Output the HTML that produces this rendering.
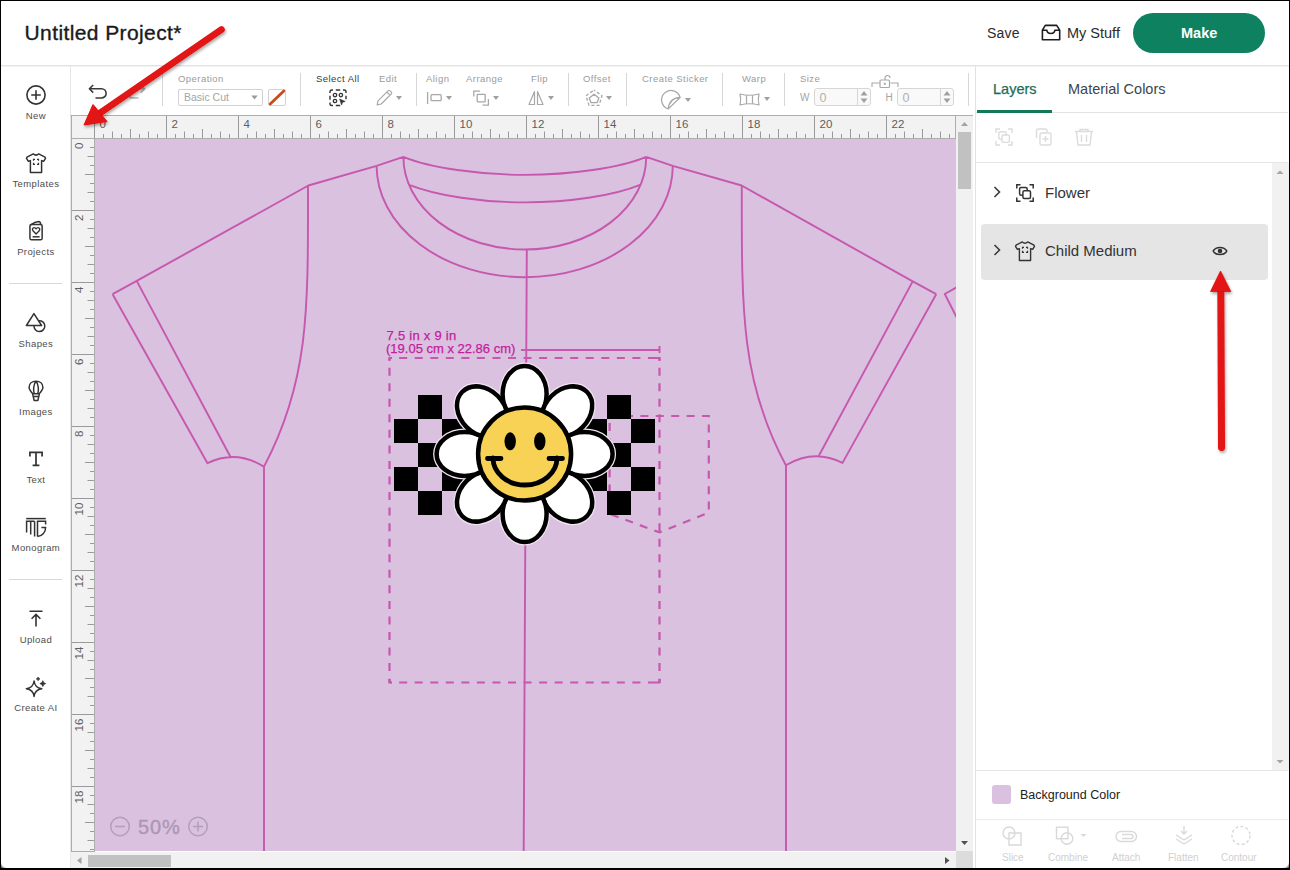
<!DOCTYPE html>
<html><head><meta charset="utf-8">
<style>
*{box-sizing:border-box;margin:0;padding:0}
html,body{width:1290px;height:870px;overflow:hidden;background:#fff;font-family:"Liberation Sans",sans-serif}
.a{position:absolute}
.t{position:absolute;white-space:nowrap;line-height:1}
.nav{position:absolute;left:0.4px;width:71px;text-align:center;font-size:9.5px;letter-spacing:0.4px;color:#4d4d4d;line-height:1;white-space:nowrap}
.lbl{position:absolute;font-size:9.5px;letter-spacing:0.45px;color:#9b9b9b;line-height:1;white-space:nowrap}
.sep{position:absolute;top:73px;width:1px;height:33px;background:#d6d6d6}
svg{position:absolute;overflow:visible}
</style></head><body>

<!-- HEADER -->
<div class="a" style="left:0;top:65px;width:1290px;height:1px;background:#e3e3e3"></div>
<div class="a" style="left:0;top:66px;width:1290px;height:1px;background:#f3f3f3"></div>
<div class="t" style="left:24.5px;top:22.3px;font-size:21px;color:#1a1a1a;letter-spacing:0.4px;-webkit-text-stroke:0.35px #1a1a1a">Untitled Project*</div>
<div class="t" style="left:987px;top:26px;font-size:14px;color:#2b2b2b;letter-spacing:0.2px">Save</div>
<svg style="left:1041px;top:24px" width="20" height="17" viewBox="0 0 20 17"><path d="M4.3 1.4 H15.7 L18.7 6.2 V15.7 H1.4 V6.2 Z M1.4 6.2 H5.8 C6.3 10.6 13.4 10.6 13.9 6.2 H18.7" fill="none" stroke="#1e1e1e" stroke-width="1.6" stroke-linejoin="round"/></svg>
<div class="t" style="left:1067px;top:26px;font-size:14.5px;color:#2b2b2b">My Stuff</div>
<div class="a" style="left:1133px;top:13px;width:132px;height:40px;border-radius:20px;background:#0e8160"></div>
<div class="t" style="left:1181px;top:26px;font-size:14.5px;font-weight:bold;color:#fff">Make</div>

<!-- SIDEBAR -->
<div class="a" style="left:70px;top:66px;width:1px;height:803px;background:#e6e6e6"></div>
<svg style="left:26px;top:85px" width="20" height="20" viewBox="0 0 20 20"><circle cx="10" cy="10" r="9.1" fill="none" stroke="#333" stroke-width="1.6"/><path d="M10 5.2V14.8M5.2 10H14.8" stroke="#333" stroke-width="1.6"/></svg>
<div class="nav" style="top:110.8px">New</div>
<svg style="left:26px;top:153px" width="20" height="20" viewBox="0 0 20 20"><path d="M7.3 0.9 L1 4.2 L0.5 5.4 L2.2 8.2 L4.4 7.6 V19.5 H15.6 V7.6 L17.8 8.2 L19.5 5.4 L19 4.2 L12.7 0.9 Q10 3.4 7.3 0.9 Z" fill="none" stroke="#333" stroke-width="1.5" stroke-linejoin="round"/><path d="M7.5 7.8V6.3H9M11 6.3H12.5V7.8M12.5 9.8V11.3H11M9 11.3H7.5V9.8" stroke="#333" stroke-width="1.2" fill="none"/></svg>
<div class="nav" style="top:178.8px">Templates</div>
<svg style="left:29px;top:221px" width="15" height="21" viewBox="0 0 15 21"><g fill="none" stroke="#333" stroke-width="1.5" stroke-linejoin="round"><rect x="0.95" y="3.4" width="12.2" height="15.4" rx="1.6"/><path d="M1.6 3.8 Q6 0.9 9.6 0.6 Q11.3 0.6 11.8 3.4"/><path d="M7.1 12.9 L4 9.8 C3 8.6 3.5 6.6 5.2 6.6 C6.1 6.6 6.7 7.2 7.1 7.8 C7.5 7.2 8.1 6.6 9 6.6 C10.7 6.6 11.2 8.6 10.2 9.8 Z" stroke-width="1.4"/><path d="M3.6 15.8 H10.6"/></g></svg>
<div class="nav" style="top:246.8px">Projects</div>
<div class="a" style="left:9px;top:283px;width:53px;height:1px;background:#d8d8d8"></div>
<svg style="left:26px;top:312px" width="22" height="22" viewBox="0 0 22 22"><path d="M7.9 1.6 L15.6 13.5 H0.4 Z" fill="none" stroke="#333" stroke-width="1.5" stroke-linejoin="round"/><path d="M12.7 8.74 A5.4 5.4 0 1 1 8.03 13.5" fill="none" stroke="#333" stroke-width="1.5"/></svg>
<div class="nav" style="top:338.8px">Shapes</div>
<svg style="left:22px;top:376px" width="28" height="28" viewBox="0 0 28 28"><g fill="none" stroke="#333" stroke-width="1.5" stroke-linejoin="round"><path d="M10.6 17.6 C8.2 15 7.1 13.2 7.1 11.3 C7.1 7.6 10 5.3 14 5.3 C18 5.3 20.9 7.6 20.9 11.3 C20.9 13.2 19.8 15 17.4 17.6"/><path d="M14 5.4 C11.2 8 11.2 15 12.3 17.6 M14 5.4 C16.8 8 16.8 15 15.7 17.6"/><path d="M10.6 17.8 H17.4 L15.9 24.4 H12.1 Z M11.3 20.6 H16.7"/></g></svg>
<div class="nav" style="top:406.8px">Images</div>
<svg style="left:28px;top:451px" width="16" height="16" viewBox="0 0 16 16"><path d="M1.9 5.5 V1.4 H14.1 V5.5 M8 1.4 V14.3 M4.6 14.3 H11.4" fill="none" stroke="#333" stroke-width="1.7"/></svg>
<div class="nav" style="top:474.8px">Text</div>
<svg style="left:22px;top:512px" width="28" height="28" viewBox="0 0 28 28"><g fill="none" stroke="#333" stroke-width="1.5"><path d="M4.2 6.6H23.8"/><path d="M4.6 20.6V9.3H12.6M8.7 9.3V22.4M12.6 9.3V24.5"/><path d="M15.5 24.5V9.3H23.6V12.6M19.4 15.5H23.6A8.1 9 0 0 1 15.5 24.5"/></g></svg>
<div class="nav" style="top:542.8px">Monogram</div>
<div class="a" style="left:9px;top:579px;width:53px;height:1px;background:#d8d8d8"></div>
<svg style="left:28px;top:610px" width="16" height="17" viewBox="0 0 16 17"><path d="M1.5 1.2H14.5M8 4.5V16.5M3.6 8.8L8 4.4L12.4 8.8" fill="none" stroke="#333" stroke-width="1.6"/></svg>
<div class="nav" style="top:634.8px">Upload</div>
<svg style="left:22px;top:672px" width="28" height="28" viewBox="0 0 28 28"><path d="M12.07 9 Q12.9 15.9 19.8 16.7 Q12.9 17.5 12.07 24.4 Q11.2 17.5 4.3 16.7 Q11.2 15.9 12.07 9 Z" fill="none" stroke="#333" stroke-width="1.5" stroke-linejoin="round"/><path d="M20.8 8.7 Q21.2 11.2 23.7 11.6 Q21.2 12 20.8 14.5 Q20.4 12 17.9 11.6 Q20.4 11.2 20.8 8.7Z M16.1 5.1 Q16.3 6.7 17.9 6.9 Q16.3 7.1 16.1 8.7 Q15.9 7.1 14.3 6.9 Q15.9 6.7 16.1 5.1Z" fill="#333" stroke="#333" stroke-width="0.8" stroke-linejoin="round"/></svg>
<div class="nav" style="top:702.8px">Create AI</div>
<!-- TOOLBAR -->
<svg style="left:88px;top:84px" width="20" height="16" viewBox="0 0 20 16"><path d="M1.5 4.8 H13.5 A4.6 4.6 0 0 1 13.5 14 H7.5" fill="none" stroke="#3a3a3a" stroke-width="1.6"/><path d="M5.2 1 L1.4 4.8 L5.2 8.6" fill="none" stroke="#3a3a3a" stroke-width="1.6" stroke-linejoin="round"/></svg>
<svg style="left:125.5px;top:84px" width="20" height="16" viewBox="0 0 20 16"><path d="M18.5 4.8 H6.5 A4.6 4.6 0 0 0 6.5 14 H12.5" fill="none" stroke="#b5b5b5" stroke-width="1.6"/><path d="M14.8 1 L18.6 4.8 L14.8 8.6" fill="none" stroke="#b5b5b5" stroke-width="1.6"/></svg>
<div class="sep" style="left:162px"></div>
<div class="lbl" style="left:178px;top:73.6px">Operation</div>
<div class="a" style="left:178px;top:89px;width:85px;height:17px;border:1px solid #d2d2d2;border-radius:2px;background:#fff"></div>
<div class="t" style="left:184px;top:92px;font-size:10.5px;color:#a5a5a5">Basic Cut</div>
<svg style="left:251px;top:95px" width="7" height="5" viewBox="0 0 7 5"><path d="M0.3 0.5H6.7L3.5 4.5Z" fill="#9a9a9a"/></svg>
<div class="a" style="left:268px;top:89px;width:18px;height:17px;border:1px solid #d2d2d2;border-radius:2px;background:#fff"></div>
<svg style="left:268px;top:89px" width="18" height="17" viewBox="0 0 18 17"><path d="M2.2 15 L15.8 2" stroke="#c94a1a" stroke-width="2.8" stroke-linecap="round"/></svg>
<div class="sep" style="left:300px"></div>
<div class="t" style="left:316px;top:73.6px;font-size:9.5px;letter-spacing:0.45px;color:#3a3a3a">Select All</div>
<svg style="left:329px;top:89px" width="18" height="18" viewBox="0 0 18 18"><g fill="none" stroke="#333" stroke-width="1.4"><path d="M1 4V2.8Q1 1 2.8 1H4M14 1H15.2Q17 1 17 2.8V4M1 13.5V14.7Q1 16.5 2.8 16.5H4M6.8 1H11.2M6.8 16.5H11.2M1 6.8V10.8M17 6.8V10.2"/><circle cx="6" cy="6.1" r="1.7" stroke-width="1.3"/><circle cx="11.9" cy="6.1" r="1.7" stroke-width="1.3"/><circle cx="6" cy="12" r="1.7" stroke-width="1.3"/></g><path d="M10.6 10 L16.2 12.4 L13.5 13.3 L12.6 16 Z" fill="#333" stroke="#333" stroke-width="0.6" stroke-linejoin="round"/></svg>
<div class="lbl" style="left:379px;top:73.6px">Edit</div>
<svg style="left:376px;top:89px" width="17" height="17" viewBox="0 0 17 17"><path d="M1.2 15.8 L2 11.8 L12.2 1.6 Q13 0.9 13.8 1.6 L15.4 3.2 Q16.1 4 15.4 4.8 L5.2 15 Z M10.8 3 L14 6.2" fill="none" stroke="#a8a8a8" stroke-width="1.2" stroke-linejoin="round"/></svg>
<svg style="left:396px;top:96px" width="6" height="4" viewBox="0 0 6 4"><path d="M0 0H6L3 4Z" fill="#a0a0a0"/></svg>
<div class="sep" style="left:416px"></div>
<div class="lbl" style="left:426px;top:73.6px">Align</div>
<svg style="left:426px;top:91px" width="16" height="14" viewBox="0 0 16 14"><path d="M1.6 1V13" stroke="#a8a8a8" stroke-width="1.3"/><rect x="5" y="3.7" width="10.2" height="6" rx="1" fill="none" stroke="#a8a8a8" stroke-width="1.3"/></svg>
<svg style="left:446px;top:96px" width="6" height="4" viewBox="0 0 6 4"><path d="M0 0H6L3 4Z" fill="#a0a0a0"/></svg>
<div class="lbl" style="left:466px;top:73.6px">Arrange</div>
<svg style="left:473px;top:90px" width="17" height="17" viewBox="0 0 17 17"><path d="M0.8 6.5V1.2H7M15.4 9V15.2H9.5" fill="none" stroke="#a8a8a8" stroke-width="1.3"/><rect x="4.2" y="4.3" width="8" height="7.5" rx="0.6" fill="none" stroke="#a8a8a8" stroke-width="1.3"/></svg>
<svg style="left:493px;top:96px" width="6" height="4" viewBox="0 0 6 4"><path d="M0 0H6L3 4Z" fill="#a0a0a0"/></svg>
<div class="lbl" style="left:531px;top:73.6px">Flip</div>
<svg style="left:528px;top:90px" width="16" height="16" viewBox="0 0 16 16"><path d="M6.5 1.5 L1 14.5 H6.5 Z M9.5 1.5 L15 14.5 H9.5 Z" fill="none" stroke="#a8a8a8" stroke-width="1.2" stroke-linejoin="round"/></svg>
<svg style="left:548px;top:96px" width="6" height="4" viewBox="0 0 6 4"><path d="M0 0H6L3 4Z" fill="#a0a0a0"/></svg>
<div class="sep" style="left:568px"></div>
<div class="lbl" style="left:583px;top:73.6px">Offset</div>
<svg style="left:585px;top:89px" width="18" height="18" viewBox="0 0 18 18"><path d="M9 5.2 L13.9 9.1 L12 13.7 H6 L4.3 9.1 Z" fill="none" stroke="#a8a8a8" stroke-width="1.3" stroke-linejoin="round"/><path d="M9 1 L17 6.8 L14 16.4 H4 L1 6.8 Z" fill="none" stroke="#a8a8a8" stroke-width="1.3" stroke-dasharray="3.2 2" stroke-dashoffset="1.6" stroke-linejoin="round"/></svg>
<svg style="left:606px;top:96px" width="6" height="4" viewBox="0 0 6 4"><path d="M0 0H6L3 4Z" fill="#a0a0a0"/></svg>
<div class="sep" style="left:626px"></div>
<div class="lbl" style="left:642px;top:73.6px">Create Sticker</div>
<svg style="left:661px;top:90px" width="21" height="21" viewBox="0 0 21 21"><path d="M19.1 7.5 A9.4 9.4 0 1 0 7.3 18.9 Z M19.1 7.5 C13 7.8 8 10.5 7.3 18.9" fill="none" stroke="#a8a8a8" stroke-width="1.3" stroke-linejoin="round"/></svg>
<svg style="left:685px;top:98.3px" width="6" height="4" viewBox="0 0 6 4"><path d="M0 0H6L3 4Z" fill="#a0a0a0"/></svg>
<div class="sep" style="left:722px"></div>
<div class="lbl" style="left:742px;top:73.6px">Warp</div>
<svg style="left:739px;top:93px" width="21" height="13" viewBox="0 0 21 13"><path d="M1 1 Q10.5 3.5 20 1 Q18.5 6.5 20 12 Q10.5 9.5 1 12 Q2.5 6.5 1 1 Z M7.5 2.3V10.7M13.5 2.3V10.7" fill="none" stroke="#a8a8a8" stroke-width="1.2" stroke-linejoin="round"/></svg>
<svg style="left:764px;top:97px" width="6" height="4" viewBox="0 0 6 4"><path d="M0 0H6L3 4Z" fill="#a0a0a0"/></svg>
<div class="sep" style="left:784px"></div>
<div class="lbl" style="left:800px;top:73.6px">Size</div>
<div class="t" style="left:800px;top:93.2px;font-size:10px;color:#a5a5a5">W</div>
<div class="a" style="left:814px;top:88px;width:57px;height:18px;border:1px solid #d6d6d6;border-radius:3px;background:#f9f9f9"></div>
<div class="a" style="left:857px;top:88px;width:1px;height:18px;background:#d6d6d6"></div>
<div class="t" style="left:819.5px;top:92.2px;font-size:12.5px;color:#b0b0b0">0</div>
<svg style="left:860px;top:90px" width="8" height="14" viewBox="0 0 8 14"><path d="M0.5 5.5H7.5L4 1Z M0.5 8.5H7.5L4 13Z" fill="#a0a0a0"/></svg>
<svg style="left:871px;top:75px" width="28" height="13" viewBox="0 0 28 13"><path d="M1 12V8H8.5M19.5 8H27V12" fill="none" stroke="#a8a8a8" stroke-width="1.1"/><rect x="9" y="5" width="9.5" height="7.5" rx="1" fill="none" stroke="#a8a8a8" stroke-width="1.2"/><path d="M14 5V3 A2.5 2.5 0 0 1 19 3" fill="none" stroke="#a8a8a8" stroke-width="1.2"/><rect x="12.8" y="7.8" width="2" height="2" fill="#a8a8a8"/></svg>
<div class="t" style="left:885.5px;top:93.2px;font-size:10px;color:#a5a5a5">H</div>
<div class="a" style="left:897px;top:88px;width:57px;height:18px;border:1px solid #d6d6d6;border-radius:3px;background:#f9f9f9"></div>
<div class="a" style="left:940px;top:88px;width:1px;height:18px;background:#d6d6d6"></div>
<div class="t" style="left:902.5px;top:92.2px;font-size:12.5px;color:#b0b0b0">0</div>
<svg style="left:943px;top:90px" width="8" height="14" viewBox="0 0 8 14"><path d="M0.5 5.5H7.5L4 1Z M0.5 8.5H7.5L4 13Z" fill="#a0a0a0"/></svg>
<div class="sep" style="left:968px"></div>

<!-- RULERS -->
<div class="a" style="left:71px;top:115px;width:885px;height:24px;background:#f2f2f2"></div>
<div class="a" style="left:71px;top:139px;width:24px;height:713px;background:#f2f2f2"></div>
<svg style="left:0;top:0" width="1290" height="870" viewBox="0 0 1290 870">
<path d="M70.5 115.5H973M71.5 115V851M94.5 115V851M71 138.5H956M955.5 115V139M71 851.5H95" stroke="#adadad" stroke-width="1" fill="none"/>
<path d="M94.5 116V138 M103.5 134V138 M112.5 131.5V138 M121.5 134V138 M130.5 129V138 M139.5 134V138 M148.5 131.5V138 M157.5 134V138 M166.5 116V138 M175.5 134V138 M184.5 131.5V138 M193.5 134V138 M202.5 129V138 M211.5 134V138 M220.5 131.5V138 M229.5 134V138 M238.5 116V138 M247.5 134V138 M256.5 131.5V138 M265.5 134V138 M274.5 129V138 M283.5 134V138 M292.5 131.5V138 M301.5 134V138 M310.5 116V138 M319.5 134V138 M328.5 131.5V138 M337.5 134V138 M346.5 129V138 M355.5 134V138 M364.5 131.5V138 M373.5 134V138 M382.5 116V138 M391.5 134V138 M400.5 131.5V138 M409.5 134V138 M418.5 129V138 M427.5 134V138 M436.5 131.5V138 M445.5 134V138 M454.5 116V138 M463.5 134V138 M472.5 131.5V138 M481.5 134V138 M490.5 129V138 M499.5 134V138 M508.5 131.5V138 M517.5 134V138 M526.5 116V138 M535.5 134V138 M544.5 131.5V138 M553.5 134V138 M562.5 129V138 M571.5 134V138 M580.5 131.5V138 M589.5 134V138 M598.5 116V138 M607.5 134V138 M616.5 131.5V138 M625.5 134V138 M634.5 129V138 M643.5 134V138 M652.5 131.5V138 M661.5 134V138 M670.5 116V138 M679.5 134V138 M688.5 131.5V138 M697.5 134V138 M706.5 129V138 M715.5 134V138 M724.5 131.5V138 M733.5 134V138 M742.5 116V138 M751.5 134V138 M760.5 131.5V138 M769.5 134V138 M778.5 129V138 M787.5 134V138 M796.5 131.5V138 M805.5 134V138 M814.5 116V138 M823.5 134V138 M832.5 131.5V138 M841.5 134V138 M850.5 129V138 M859.5 134V138 M868.5 131.5V138 M877.5 134V138 M886.5 116V138 M895.5 134V138 M904.5 131.5V138 M913.5 134V138 M922.5 129V138 M931.5 134V138 M940.5 131.5V138 M949.5 134V138 M90 147.5H94 M87.5 156.5H94 M90 165.5H94 M85 174.5H94 M90 183.5H94 M87.5 192.5H94 M90 201.5H94 M72 210.5H94 M90 219.5H94 M87.5 228.5H94 M90 237.5H94 M85 246.5H94 M90 255.5H94 M87.5 264.5H94 M90 273.5H94 M72 282.5H94 M90 291.5H94 M87.5 300.5H94 M90 309.5H94 M85 318.5H94 M90 327.5H94 M87.5 336.5H94 M90 345.5H94 M72 354.5H94 M90 363.5H94 M87.5 372.5H94 M90 381.5H94 M85 390.5H94 M90 399.5H94 M87.5 408.5H94 M90 417.5H94 M72 426.5H94 M90 435.5H94 M87.5 444.5H94 M90 453.5H94 M85 462.5H94 M90 471.5H94 M87.5 480.5H94 M90 489.5H94 M72 498.5H94 M90 507.5H94 M87.5 516.5H94 M90 525.5H94 M85 534.5H94 M90 543.5H94 M87.5 552.5H94 M90 561.5H94 M72 570.5H94 M90 579.5H94 M87.5 588.5H94 M90 597.5H94 M85 606.5H94 M90 615.5H94 M87.5 624.5H94 M90 633.5H94 M72 642.5H94 M90 651.5H94 M87.5 660.5H94 M90 669.5H94 M85 678.5H94 M90 687.5H94 M87.5 696.5H94 M90 705.5H94 M72 714.5H94 M90 723.5H94 M87.5 732.5H94 M90 741.5H94 M85 750.5H94 M90 759.5H94 M87.5 768.5H94 M90 777.5H94 M72 786.5H94 M90 795.5H94 M87.5 804.5H94 M90 813.5H94 M85 822.5H94 M90 831.5H94 M87.5 840.5H94 M90 849.5H94" stroke="#9a9a9a" stroke-width="1" fill="none"/>
<text x="99.5" y="127.6" font-size="11.5" fill="#5e5e5e" font-family="Liberation Sans">0</text>
<text x="171.5" y="127.6" font-size="11.5" fill="#5e5e5e" font-family="Liberation Sans">2</text>
<text x="243.5" y="127.6" font-size="11.5" fill="#5e5e5e" font-family="Liberation Sans">4</text>
<text x="315.5" y="127.6" font-size="11.5" fill="#5e5e5e" font-family="Liberation Sans">6</text>
<text x="387.5" y="127.6" font-size="11.5" fill="#5e5e5e" font-family="Liberation Sans">8</text>
<text x="459.5" y="127.6" font-size="11.5" fill="#5e5e5e" font-family="Liberation Sans">10</text>
<text x="531.5" y="127.6" font-size="11.5" fill="#5e5e5e" font-family="Liberation Sans">12</text>
<text x="603.5" y="127.6" font-size="11.5" fill="#5e5e5e" font-family="Liberation Sans">14</text>
<text x="675.5" y="127.6" font-size="11.5" fill="#5e5e5e" font-family="Liberation Sans">16</text>
<text x="747.5" y="127.6" font-size="11.5" fill="#5e5e5e" font-family="Liberation Sans">18</text>
<text x="819.5" y="127.6" font-size="11.5" fill="#5e5e5e" font-family="Liberation Sans">20</text>
<text x="891.5" y="127.6" font-size="11.5" fill="#5e5e5e" font-family="Liberation Sans">22</text>
<text transform="translate(83.2 142.7) rotate(-90)" text-anchor="end" font-size="11.5" fill="#5e5e5e" font-family="Liberation Sans">0</text>
<text transform="translate(83.2 214.7) rotate(-90)" text-anchor="end" font-size="11.5" fill="#5e5e5e" font-family="Liberation Sans">2</text>
<text transform="translate(83.2 286.7) rotate(-90)" text-anchor="end" font-size="11.5" fill="#5e5e5e" font-family="Liberation Sans">4</text>
<text transform="translate(83.2 358.7) rotate(-90)" text-anchor="end" font-size="11.5" fill="#5e5e5e" font-family="Liberation Sans">6</text>
<text transform="translate(83.2 430.7) rotate(-90)" text-anchor="end" font-size="11.5" fill="#5e5e5e" font-family="Liberation Sans">8</text>
<text transform="translate(83.2 502.7) rotate(-90)" text-anchor="end" font-size="11.5" fill="#5e5e5e" font-family="Liberation Sans">10</text>
<text transform="translate(83.2 574.7) rotate(-90)" text-anchor="end" font-size="11.5" fill="#5e5e5e" font-family="Liberation Sans">12</text>
<text transform="translate(83.2 646.7) rotate(-90)" text-anchor="end" font-size="11.5" fill="#5e5e5e" font-family="Liberation Sans">14</text>
<text transform="translate(83.2 718.7) rotate(-90)" text-anchor="end" font-size="11.5" fill="#5e5e5e" font-family="Liberation Sans">16</text>
<text transform="translate(83.2 790.7) rotate(-90)" text-anchor="end" font-size="11.5" fill="#5e5e5e" font-family="Liberation Sans">18</text>
</svg>

<!-- CANVAS -->
<div class="a" style="left:95px;top:139px;width:861px;height:712px;background:#d9c1df;overflow:hidden">
<svg style="left:-95px;top:-139px" width="1290" height="870" viewBox="0 0 1290 870">
<path d="M112.6 294.2 L136.7 280.9 L308.4 185.5 L376.6 165.8 L403.4 156.9 M112.6 294.2 L207.5 463.2 Q236 449 264.3 466.9 M136.7 280.9 L230.4 456.7 M308 185.5 C308.2 312 308.8 382 264 466.6 V852 M936.2 294.2 L912.7 281.4 L741.6 185.5 L672.8 165.8 L646.2 156.9 M936.2 294.2 L842.5 462.9 Q814 448.5 785.8 465.3 M912.7 281.4 L819 455.5 M741.8 185.5 C741.6 312 741 382 786 465.5 V852 M376.6 165.8 A148.4 111.4 0 0 0 525 277.2 A147.8 111.4 0 0 0 672.8 165.8 M403.4 156.9 A121.6 92.6 0 0 0 525 249.5 A121.2 92.6 0 0 0 646.2 156.9 M403.4 156.9 C430 168 480 174.9 525 174.9 C570 174.9 620 168 646.2 156.9 M408.6 184.6 C437 196 482 202.4 525 202.4 C568 202.4 613 196 640.8 184.6 M526.8 249.5 L523.7 852 M957 287 L944.8 294 L957 318" fill="none" stroke="#c658ad" stroke-width="1.9" stroke-linejoin="round"/>
<text x="386.5" y="339.8" font-size="13" fill="#c4209e" stroke="#c4209e" stroke-width="0.25" letter-spacing="0.27" font-family="Liberation Sans">7.5 in x 9 in</text>
<text x="386" y="352.5" font-size="13" fill="#c4209e" stroke="#c4209e" stroke-width="0.25" font-family="Liberation Sans">(19.05 cm x 22.86 cm)</text>
<path d="M521 350H659.5M659.5 346V353" stroke="#c658ad" stroke-width="1.9" fill="none"/>
<path d="M389.5 358H659.5M659.5 358V682.5M389.5 682.5H659.5M389.5 358V682.5" fill="none" stroke="#c658ad" stroke-width="2.2" stroke-dasharray="8 7.55" stroke-dashoffset="5.9"/>
<path d="M388.4 358H392M389.5 357V361M659.5 357V361M656 358H660.6M388.4 682.5H392M389.5 679V683.6M656 682.5H660.6M659.5 679V683.6" fill="none" stroke="#c658ad" stroke-width="2.2"/>
<path d="M609.6 416 H708.8 V512.5 L659.4 532.4 L609.6 513.9 Z" fill="none" stroke="#c658ad" stroke-width="2.2" stroke-dasharray="8 7.4"/>
<path d="M418 395h24v24h-24z M607 395h24v24h-24z M394 419h24v24h-24z M442 419h24v24h-24z M583 419h24v24h-24z M631 419h24v24h-24z M418 443h24v24h-24z M607 443h24v24h-24z M394 467h24v24h-24z M442 467h24v24h-24z M583 467h24v24h-24z M631 467h24v24h-24z M418 491h24v24h-24z M607 491h24v24h-24z" fill="#000"/>
<g fill="#f1e4f1" stroke="#f1e4f1" stroke-width="7"><ellipse cx="0" cy="-60" rx="22" ry="28" transform="translate(524.6 454) rotate(0)"/><ellipse cx="0" cy="-60" rx="22" ry="28" transform="translate(524.6 454) rotate(45)"/><ellipse cx="0" cy="-60" rx="22" ry="28" transform="translate(524.6 454) rotate(90)"/><ellipse cx="0" cy="-60" rx="22" ry="28" transform="translate(524.6 454) rotate(135)"/><ellipse cx="0" cy="-60" rx="22" ry="28" transform="translate(524.6 454) rotate(180)"/><ellipse cx="0" cy="-60" rx="22" ry="28" transform="translate(524.6 454) rotate(225)"/><ellipse cx="0" cy="-60" rx="22" ry="28" transform="translate(524.6 454) rotate(270)"/><ellipse cx="0" cy="-60" rx="22" ry="28" transform="translate(524.6 454) rotate(315)"/></g>
<g fill="#fff" stroke="#000" stroke-width="4.5"><ellipse cx="0" cy="-60" rx="22" ry="28" transform="translate(524.6 454) rotate(0)"/><ellipse cx="0" cy="-60" rx="22" ry="28" transform="translate(524.6 454) rotate(45)"/><ellipse cx="0" cy="-60" rx="22" ry="28" transform="translate(524.6 454) rotate(90)"/><ellipse cx="0" cy="-60" rx="22" ry="28" transform="translate(524.6 454) rotate(135)"/><ellipse cx="0" cy="-60" rx="22" ry="28" transform="translate(524.6 454) rotate(180)"/><ellipse cx="0" cy="-60" rx="22" ry="28" transform="translate(524.6 454) rotate(225)"/><ellipse cx="0" cy="-60" rx="22" ry="28" transform="translate(524.6 454) rotate(270)"/><ellipse cx="0" cy="-60" rx="22" ry="28" transform="translate(524.6 454) rotate(315)"/></g>
<circle cx="524.6" cy="454" r="46.5" fill="#f8d255" stroke="#000" stroke-width="4.5"/>
<ellipse cx="510.2" cy="441.3" rx="5.7" ry="9" fill="#000"/><ellipse cx="539.8" cy="441.3" rx="5.7" ry="9" fill="#000"/>
<path d="M493 458 A32 27 0 0 0 557 458 M487.5 458.5 H501 M549 458.5 H562.5" fill="none" stroke="#000" stroke-width="4.8" stroke-linecap="round"/>
<g fill="none" stroke="#b29fba" stroke-width="1.5"><circle cx="120" cy="826.5" r="9.3"/><path d="M115 826.5H125"/><circle cx="198" cy="826.5" r="9.3"/><path d="M193 826.5H203M198 821.5V831.5"/></g>
<text x="138" y="833.6" font-size="20" fill="#ab96b4" stroke="#ab96b4" stroke-width="0.3" letter-spacing="0.9" font-family="Liberation Sans">50%</text>
</svg></div>
<div class="a" style="left:956px;top:116px;width:17px;height:735px;background:#f1f1f1"></div>
<div class="a" style="left:958px;top:132px;width:13px;height:57px;background:#c1c1c1"></div>
<svg style="left:956px;top:115px" width="17" height="736" viewBox="0 0 17 736"><path d="M5 11H12L8.5 7Z" fill="#a3a3a3"/><path d="M5 726H12L8.5 730Z" fill="#505050"/></svg>
<div class="a" style="left:71px;top:852px;width:885px;height:16px;background:#f1f1f1"></div>
<div class="a" style="left:88px;top:854.5px;width:83px;height:12.5px;background:#c1c1c1"></div>
<svg style="left:71px;top:851px" width="885" height="17" viewBox="0 0 885 17"><path d="M10.5 6V13L6 9.5Z" fill="#a3a3a3"/><path d="M874 6V13L878.5 9.5Z" fill="#505050"/></svg>
<div class="a" style="left:956px;top:851px;width:17px;height:17px;background:#dcdcdc"></div>
<!-- RIGHT PANEL -->
<div class="a" style="left:975px;top:66px;width:1px;height:802px;background:#e2e2e2"></div>
<div class="t" style="left:993px;top:82px;font-size:14.5px;color:#1d6e5a;-webkit-text-stroke:0.25px #1d6e5a">Layers</div>
<div class="t" style="left:1068px;top:82px;font-size:14.5px;color:#3b4650">Material Colors</div>
<div class="a" style="left:976px;top:112px;width:312px;height:1px;background:#e3e3e3"></div>
<div class="a" style="left:977px;top:110px;width:75px;height:3px;background:#127a59"></div>
<svg style="left:995px;top:128px" width="100" height="18" viewBox="0 0 100 18"><g fill="none" stroke="#dcdcdc" stroke-width="1.4"><path d="M1 5V1H5M13 1H17V5M17 13V17H13M5 17H1V13"/><rect x="3.8" y="3.8" width="7.4" height="7.4" rx="1.4"/><rect x="7" y="7" width="7.4" height="7.4" rx="1.4" fill="#fff"/><path d="M41.5 10V2.5Q41.5 1 43 1H50.5Q52 1 52 2.5V4"/><rect x="45" y="5" width="11" height="12" rx="1.4" fill="#fff"/><path d="M47.5 11H53.5M50.5 8V14"/><path d="M80 3.5H98M85 3.5V1.5H93V3.5M81.5 3.5L83 17H95L96.5 3.5M86.5 7V14M91.5 7V14"/></g></svg>
<div class="a" style="left:976px;top:162px;width:312px;height:1px;background:#e6e6e6"></div>
<!-- panel scrollbar -->
<div class="a" style="left:1272px;top:163px;width:17px;height:607px;background:#f1f1f1"></div>
<svg style="left:1272px;top:163px" width="16" height="607" viewBox="0 0 16 607"><path d="M4.5 11H11.5L8 7.5Z" fill="#a3a3a3"/><path d="M4.5 597H11.5L8 600.5Z" fill="#a3a3a3"/></svg>
<!-- layer rows -->
<svg style="left:993px;top:186px" width="8" height="12" viewBox="0 0 8 12"><path d="M1.5 1L6.5 6L1.5 11" fill="none" stroke="#3a3a3a" stroke-width="1.6"/></svg>
<svg style="left:1016px;top:184px" width="18" height="18" viewBox="0 0 18 18"><g fill="none" stroke="#333" stroke-width="1.5"><path d="M0.8 4.5V0.8H4.5M13.5 0.8H17.2V4.5M17.2 13.5V17.2H13.5M4.5 17.2H0.8V13.5"/><rect x="3.6" y="3.6" width="7.6" height="7.6" rx="1.5"/><rect x="6.9" y="6.8" width="7.6" height="7.6" rx="1.5" fill="#fff"/></g></svg>
<div class="t" style="left:1045px;top:185px;font-size:15px;color:#333">Flower</div>
<div class="a" style="left:981px;top:224px;width:287px;height:56px;background:#e5e5e5;border-radius:4px"></div>
<svg style="left:993px;top:244px" width="8" height="12" viewBox="0 0 8 12"><path d="M1.5 1L6.5 6L1.5 11" fill="none" stroke="#3a3a3a" stroke-width="1.6"/></svg>
<svg style="left:1015px;top:241px" width="20" height="20" viewBox="0 0 20 20"><path d="M7.3 0.9 L1 4.2 L0.5 5.4 L2.2 8.2 L4.4 7.6 V19.5 H15.6 V7.6 L17.8 8.2 L19.5 5.4 L19 4.2 L12.7 0.9 Q10 3.4 7.3 0.9 Z" fill="none" stroke="#333" stroke-width="1.4" stroke-linejoin="round"/><path d="M7.5 7.8V6.3H9M11 6.3H12.5V7.8M12.5 9.8V11.3H11M9 11.3H7.5V9.8" stroke="#333" stroke-width="1.2" fill="none"/></svg>
<div class="t" style="left:1045px;top:243px;font-size:15px;color:#333">Child Medium</div>
<svg style="left:1212px;top:245px" width="16" height="12" viewBox="0 0 16 12"><path d="M1.2 6 C4 1.2 12 1.2 14.8 6 C12 10.8 4 10.8 1.2 6 Z" fill="none" stroke="#333" stroke-width="1.5" stroke-linejoin="round"/><circle cx="8" cy="6" r="2.3" fill="#333"/></svg>
<!-- bottom -->
<div class="a" style="left:976px;top:770px;width:312px;height:1px;background:#e6e6e6"></div>
<div class="a" style="left:992px;top:785px;width:19px;height:19px;background:#d9c1df;border-radius:3px"></div>
<div class="t" style="left:1020px;top:789px;font-size:12.5px;color:#222">Background Color</div>
<div class="a" style="left:976px;top:819px;width:312px;height:1px;background:#ececec"></div>
<svg style="left:1000px;top:825px" width="270" height="24" viewBox="0 0 270 24"><g fill="none" stroke="#d9d9d9" stroke-width="1.4"><circle cx="9" cy="8" r="6"/><path d="M9 8H21V20H9Z"/><rect x="56.5" y="2.2" width="11.5" height="11.5"/><circle cx="67" cy="13.5" r="5.8"/><path d="M80.5 9H86.5L83.5 12Z" fill="#d9d9d9" stroke="none"/><path d="M121 6.5H131.5A5 5 0 0 1 131.5 16.5H121A5 5 0 0 1 121 6.5 M122 9.5H131A2 2 0 0 1 131 13.5H122"/><path d="M184 1V9M181 6L184 9L187 6M176 10L184 15L192 10M176 14L184 19L192 14"/><circle cx="241" cy="10.5" r="9" stroke-dasharray="3 2.2"/></g></svg>
<div class="t" style="left:1002px;top:853px;font-size:10px;color:#d0d0d0">Slice</div>
<div class="t" style="left:1048px;top:853px;font-size:10px;color:#d0d0d0">Combine</div>
<div class="t" style="left:1112px;top:853px;font-size:10px;color:#d0d0d0">Attach</div>
<div class="t" style="left:1168px;top:853px;font-size:10px;color:#d0d0d0">Flatten</div>
<div class="t" style="left:1221px;top:853px;font-size:10px;color:#d0d0d0">Contour</div>

<!-- RED ARROWS -->
<svg style="left:0;top:0" width="1290" height="870" viewBox="0 0 1290 870">
<defs><filter id="sh" x="-20%" y="-20%" width="140%" height="140%"><feGaussianBlur in="SourceAlpha" stdDeviation="1.5"/><feOffset dx="1" dy="2"/><feComponentTransfer><feFuncA type="linear" slope="0.35"/></feComponentTransfer><feMerge><feMergeNode/><feMergeNode in="SourceGraphic"/></feMerge></filter></defs>
<g filter="url(#sh)" fill="#e31212" stroke="#e31212">
<path d="M221.5 29.5 L100 113" stroke-width="6.6" stroke-linecap="round"/>
<path d="M84 125 L93 104.5 L107 121.5 Z" stroke-width="1" stroke-linejoin="round"/>
<path d="M1221.5 447.5 L1220.8 288" stroke-width="7" stroke-linecap="round"/>
<path d="M1220.5 271 L1210.5 291.5 L1230.8 291.5 Z" stroke-width="0.8" stroke-linejoin="round"/>
</g>
</svg>

<!-- BORDER -->
<svg style="left:0;top:0" width="1290" height="870" viewBox="0 0 1290 870"><path d="M1 862 A6 6 0 0 0 7 868 H1 Z M1289 862 A6 6 0 0 1 1283 868 H1289 Z" fill="#b5b5b5"/><path d="M1 864.5 A3.5 3.5 0 0 0 4.5 868 H1 Z M1289 864.5 A3.5 3.5 0 0 1 1285.5 868 H1289 Z" fill="#555"/></svg>
<div class="a" style="left:0;top:0;width:1290px;height:870px;border:1px solid #000;border-bottom-width:2px;border-right-width:1px;pointer-events:none"></div>
</body></html>
